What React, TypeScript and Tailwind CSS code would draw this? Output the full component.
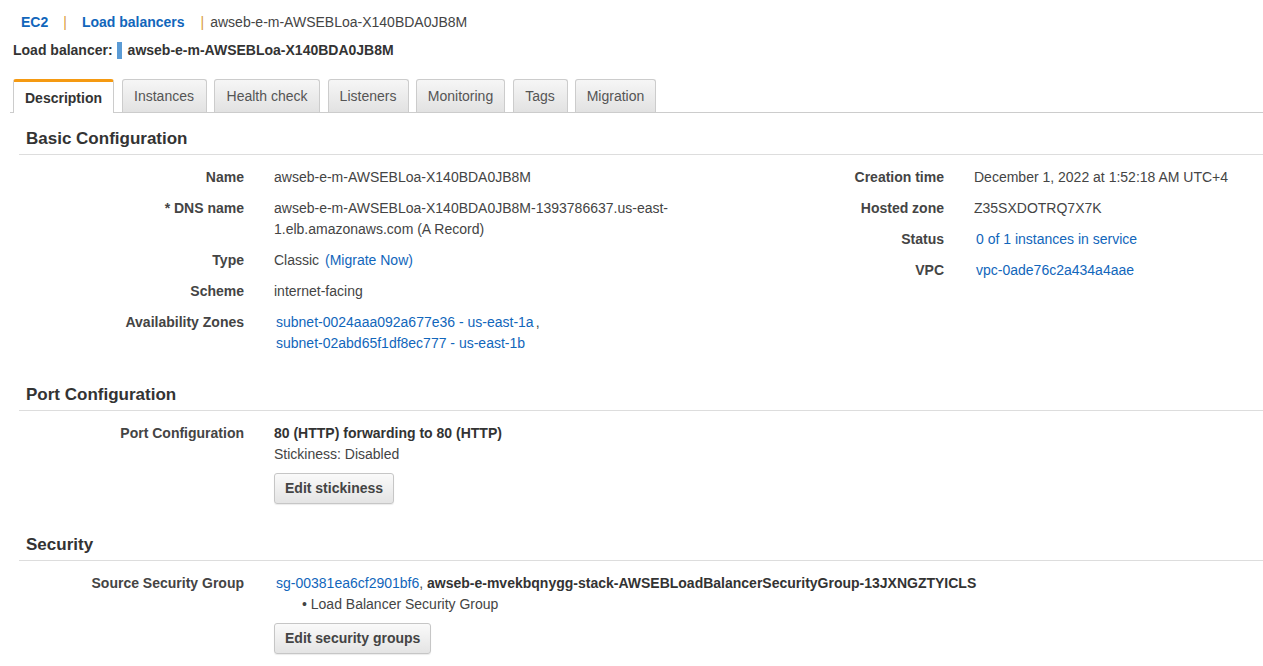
import React from "react";

const tabs: [string, number][] = [
  ["Description", 101],
  ["Instances", 85],
  ["Health check", 106],
  ["Listeners", 81],
  ["Monitoring", 89],
  ["Tags", 55],
  ["Migration", 81],
];

function Link({ children }: { children: React.ReactNode }) {
  return <a href="#" className="text-[#1166bb] hover:underline">{children}</a>;
}

function Row({ label, children, labelW = "w-[225px]" }: { label: string; children: React.ReactNode; labelW?: string }) {
  return (
    <div className="flex gap-[30px]">
      <div className={`${labelW} shrink-0 text-right font-bold text-[#444]`}>{label}</div>
      <div className="min-w-0">{children}</div>
    </div>
  );
}

function Section({ title, children }: { title: string; children: React.ReactNode }) {
  return (
    <section className="ml-[19px]">
      <h2 className="border-b border-[#dddddd] pb-[3px] pl-[7px] text-[17px] leading-[24px] font-bold text-[#333]">{title}</h2>
      <div className="mt-[12px]">{children}</div>
    </section>
  );
}

function Button({ children }: { children: React.ReactNode }) {
  return (
    <button className="mt-[8px] h-[31px] rounded-[3px] border border-[#c6c6c6] bg-gradient-to-b from-[#fafafa] to-[#e4e4e4] px-[10px] font-bold text-[#444] shadow-[0_1px_1px_rgba(0,0,0,0.08)]">
      {children}
    </button>
  );
}

export default function App() {
  return (
    <div className="min-h-screen bg-white font-['Liberation_Sans',Arial,sans-serif] text-[14px] leading-[21px] text-[#444]">
      <div className="pt-[12px] pl-[21px] leading-[20px]">
        <a href="#" className="font-bold text-[#1166bb]">EC2</a>
        <span className="ml-[15px] mr-[15px] text-[#d99a3a]">|</span>
        <a href="#" className="font-bold text-[#1166bb]">Load balancers</a>
        <span className="ml-[16px] mr-[6px] text-[#d99a3a]">|</span>
        <span className="text-[#444]">awseb-e-m-AWSEBLoa-X140BDA0JB8M</span>
      </div>
      <div className="mt-[8px] flex items-center pl-[13px] font-bold text-[#333] leading-[20px]">
        <span>Load balancer:</span>
        <span className="ml-[4px] mr-[6px] inline-block h-[17px] w-[5px] bg-[#5b9bd5]" />
        <span>awseb-e-m-AWSEBLoa-X140BDA0JB8M</span>
      </div>

      <div className="mt-[19px] ml-[10px] flex items-end gap-[7.5px] border-b border-[#cccccc] pl-[3px]">
        {tabs.map(([t, w], i) =>
          i === 0 ? (
            <div key={t} style={{ width: w }} className="-mb-px flex h-[34px] items-center justify-center rounded-t-[3px] border border-b-0 border-[#cccccc] border-t-[3px] border-t-[#f59a12] bg-white pt-[1px] font-bold text-[#333]">
              {t}
            </div>
          ) : (
            <div key={t} style={{ width: w }} className="flex h-[33px] items-center justify-center rounded-t-[3px] border border-b-0 border-[#cccccc] bg-gradient-to-b from-[#f6f6f6] to-[#e2e2e2] text-[#555]">
              {t}
            </div>
          )
        )}
      </div>

      <div className="mt-[14px]">
        <Section title="Basic Configuration">
          <div className="flex">
            <div className="flex w-[665px] flex-col gap-[10px]">
              <Row label="Name">awseb-e-m-AWSEBLoa-X140BDA0JB8M</Row>
              <Row label="* DNS name">
                <div className="w-[410px] text-[#444]">awseb-e-m-AWSEBLoa-X140BDA0JB8M-1393786637.us-east-1.elb.amazonaws.com (A Record)</div>
              </Row>
              <Row label="Type">
                Classic <span className="ml-[2px]"><Link>(Migrate Now)</Link></span>
              </Row>
              <Row label="Scheme">internet-facing</Row>
              <Row label="Availability Zones">
                <div className="pl-[2px]">
                  <div><Link>subnet-0024aaa092a677e36 - us-east-1a</Link><span className="ml-[2px]">,</span></div>
                  <div><Link>subnet-02abd65f1df8ec777 - us-east-1b</Link></div>
                </div>
              </Row>
            </div>
            <div className="flex flex-col gap-[10px]">
              <Row label="Creation time" labelW="w-[260px]">December 1, 2022 at 1:52:18 AM UTC+4</Row>
              <Row label="Hosted zone" labelW="w-[260px]">Z35SXDOTRQ7X7K</Row>
              <Row label="Status" labelW="w-[260px]"><span className="pl-[2px]"><Link>0 of 1 instances in service</Link></span></Row>
              <Row label="VPC" labelW="w-[260px]"><span className="pl-[2px]"><Link>vpc-0ade76c2a434a4aae</Link></span></Row>
            </div>
          </div>
        </Section>

        <div className="mt-[29px]">
          <Section title="Port Configuration">
            <Row label="Port Configuration">
              <div className="font-bold text-[#333]">80 (HTTP) forwarding to 80 (HTTP)</div>
              <div>Stickiness: Disabled</div>
              <Button>Edit stickiness</Button>
            </Row>
          </Section>
        </div>

        <div className="mt-[29px]">
          <Section title="Security">
            <Row label="Source Security Group">
              <div className="pl-[2px]">
                <Link>sg-00381ea6cf2901bf6</Link>
                <span>, </span>
                <span className="font-bold text-[#333]">awseb-e-mvekbqnygg-stack-AWSEBLoadBalancerSecurityGroup-13JXNGZTYICLS</span>
              </div>
              <div className="pl-[28px]">• Load Balancer Security Group</div>
              <Button>Edit security groups</Button>
            </Row>
          </Section>
        </div>
      </div>
    </div>
  );
}
